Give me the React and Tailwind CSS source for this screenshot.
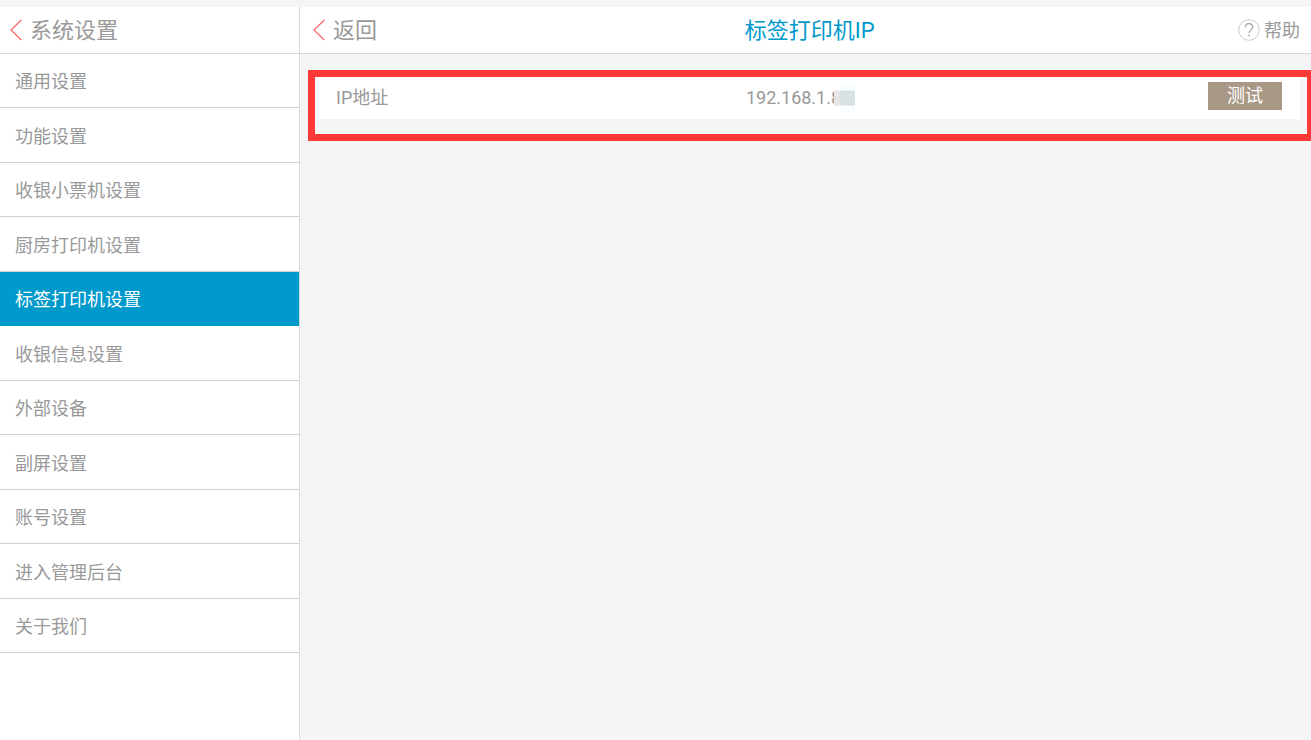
import { useState } from 'react'

const menuItems = [
  '通用设置',
  '功能设置',
  '收银小票机设置',
  '厨房打印机设置',
  '标签打印机设置',
  '收银信息设置',
  '外部设备',
  '副屏设置',
  '账号设置',
  '进入管理后台',
  '关于我们',
]

const BackArrow = () => (
  <svg className="h-[22px] w-3" viewBox="0 0 12 22" fill="none" stroke="#ff6464" strokeWidth="1.2" aria-hidden="true">
    <path d="M11.3 1L1 11l10.3 10" />
  </svg>
)

const HelpIcon = () => (
  <svg className="h-[22px] w-[22px]" viewBox="0 0 22 22" fill="none" aria-hidden="true">
    <circle cx="11" cy="11" r="10.3" stroke="#cbcbcb" />
    <path d="M7.4 8.2C7.4 5.9 9 4.6 11 4.6s3.7 1.3 3.7 3.4c0 2.8-3.6 3.1-3.6 6" stroke="#a5a5a5" strokeWidth="1.2" />
    <path d="M11.1 15.6v1.7" stroke="#a5a5a5" strokeWidth="1.5" />
  </svg>
)

const Sidebar = ({ active, onSelect }) => (
  <aside className="flex w-[300px] shrink-0 flex-col border-r border-[#dadada] bg-white">
    <header className="flex h-[47px] items-center border-b border-[#d8d8d8] pl-[10px]">
      <button type="button" className="flex items-center gap-2 text-[22px] leading-7">
        <BackArrow />
        <span className="pt-[2px]">系统设置</span>
      </button>
    </header>
    <nav className="grid h-[81vh] auto-rows-fr">
      {menuItems.map((item) => (
        <button
          key={item}
          type="button"
          onClick={() => onSelect(item)}
          className={`border-b px-[15px] pt-[3px] text-left text-lg ${
            item === active ? 'border-[#0099cc] bg-[#0099cc] text-white' : 'border-[#d0d0d0]'
          }`}
        >
          {item}
        </button>
      ))}
    </nav>
  </aside>
)

const App = () => {
  const [active, setActive] = useState('标签打印机设置')

  return (
    <div className="flex min-h-screen bg-[#f5f5f5] pt-[7px] font-[Roboto,'Noto_Sans_CJK_SC',sans-serif] text-[#999]">
      <Sidebar active={active} onSelect={setActive} />

      <main className="min-w-0 flex-1">
        <header className="grid h-[47px] grid-cols-[7fr_9fr] items-center border-b border-[#d8d8d8] bg-white pr-[11px] pl-[13px]">
          <button type="button" className="flex items-center gap-2 text-[22px] leading-7">
            <BackArrow />
            <span className="pt-[2px]">返回</span>
          </button>
          <div className="flex items-center justify-between">
            <h1 className="pt-[2px] text-[22px] leading-7 text-[#0099cc]">标签打印机IP</h1>
            <button type="button" className="flex items-center gap-1 text-lg">
              <HelpIcon />
              <span className="pt-[2px]">帮助</span>
            </button>
          </div>
        </header>

        {/* Highlighted printer address */}
        <section className="mt-4 ml-2 border-7 border-r-4 border-[#ff3838] pr-[7px] pb-[15px] pl-[3px]">
          <div className="grid h-[42px] grid-cols-[13fr_17fr] items-center bg-white px-[18px]">
            <span className="text-lg">IP地址</span>
            <div className="flex items-center justify-between">
              <div className="relative text-lg">
                192.168.1.8
                {/* Last digits stay masked */}
                <div className="absolute top-1/2 right-0 flex -translate-y-1/2 translate-x-[14px] items-center" aria-hidden="true">
                  <span className="h-[15px] w-[6px] bg-[#e6e6e6]" />
                  <span className="flex h-[31px] w-[15px] items-center bg-[#f9fdfd]">
                    <span className="h-[15px] w-full bg-[#d8e1e4]" />
                  </span>
                </div>
              </div>
              <button type="button" className="mb-1 h-7 w-[74px] bg-[#a99886] text-lg text-white">
                测试
              </button>
            </div>
          </div>
        </section>
      </main>
    </div>
  )
}

export default App
